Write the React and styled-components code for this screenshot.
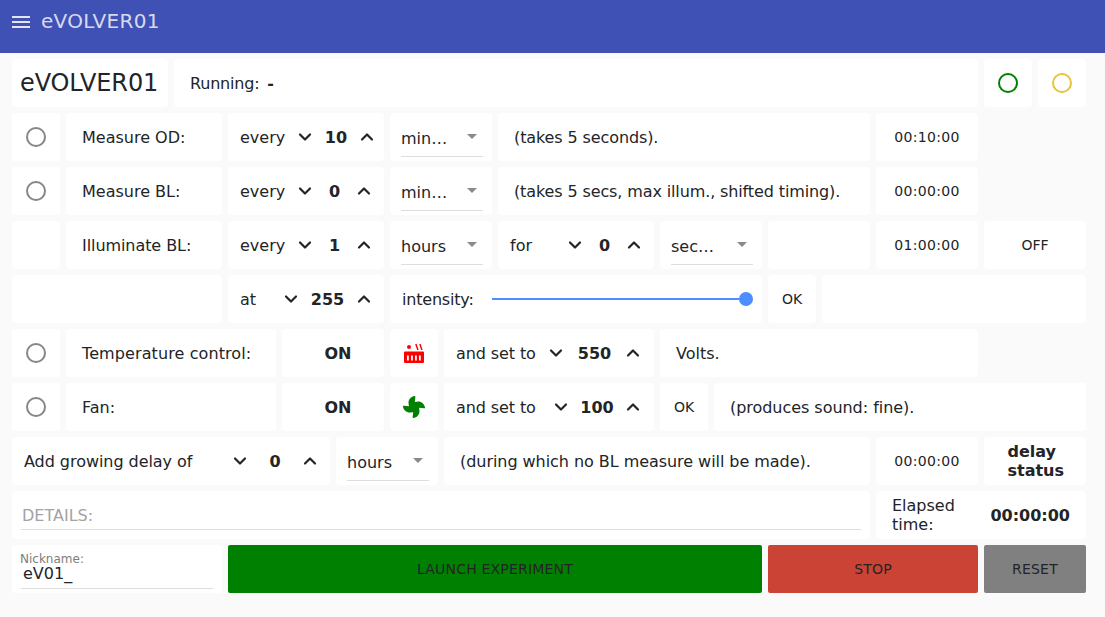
import styled, { createGlobalStyle } from "styled-components";

const GlobalStyle = createGlobalStyle`
  html, body {
    margin: 0;
    height: 100%;
    overflow: hidden;
    background: #fafafa;
    color: #222428;
    font-family: "DejaVu Sans", sans-serif;
    font-size: 16px;
  }
`;

const Header = styled.header`
  height: 53px;
  box-sizing: border-box;
  background: #3f51b5;
  display: flex;
  align-items: flex-start;
  padding: 9px 0 0 12px;
  color: rgba(255, 255, 255, 0.8);
  font-size: 20px;
  letter-spacing: 0.3px;
  gap: 11px;
`;

const Board = styled.main`
  display: grid;
  grid-template-columns: repeat(20, 48px);
  grid-auto-rows: 48px;
  gap: 6px;
  padding: 6px 12px;
`;

const Cell = styled.div`
  grid-column: span ${(p) => p.$span || 1};
  background: #fff;
  border-radius: 4px;
  display: flex;
  align-items: center;
  justify-content: ${(p) => (p.$center ? "center" : "flex-start")};
  padding: 0 ${(p) => (p.$pad === undefined ? 16 : p.$pad)}px;
  box-sizing: border-box;
  min-width: 0;
  white-space: nowrap;
  letter-spacing: ${(p) => p.$track || 0}px;
`;

const TimeCell = styled(Cell).attrs({ $span: 2, $center: true, $pad: 0 })`
  font-size: 14px;
  letter-spacing: 0.3px;
`;

const SmallCell = styled(Cell).attrs({ $center: true, $pad: 0 })`
  font-size: 14px;
`;

const OnCell = styled(Cell).attrs({ $span: 2, $center: true, $pad: 0 })`
  font-weight: 700;
  padding-left: 10px;
`;

const Spacer = styled.div`
  grid-column: span ${(p) => p.$span || 1};
`;

const Title = styled(Cell)`
  font-size: 24px;
  padding: 0 8px;
  letter-spacing: -0.1px;
`;

const RunValue = styled.b`
  margin-left: 8px;
`;

const Radio = styled.span`
  width: 20px;
  height: 20px;
  box-sizing: border-box;
  border: 2px solid #868686;
  border-radius: 50%;
`;

const Lamp = styled.span`
  width: 20px;
  height: 20px;
  box-sizing: border-box;
  border: 2px solid ${(p) => p.$color};
  border-radius: 50%;
`;

const StepLabel = styled.span`
  flex: 1;
  white-space: nowrap;
  letter-spacing: ${(p) => p.$track || 0}px;
`;

const StepValue = styled.b`
  width: ${(p) => p.$w}px;
  text-align: center;
  flex: none;
`;

const StepCell = styled(Cell)`
  padding: 0 ${(p) => p.$end || 8}px 0 12px;
`;

const Chevron = styled.svg`
  width: 24px;
  height: 24px;
  flex: none;
  fill: none;
  stroke: #222428;
  stroke-width: 2.2;
  stroke-linecap: round;
  stroke-linejoin: round;
`;

const SelectCell = styled(Cell)`
  padding: 0 9px 0 11px;
  align-items: stretch;
`;

const SelectBox = styled.div`
  flex: 1;
  min-width: 0;
  display: flex;
  align-items: center;
  justify-content: space-between;
  border-bottom: 1px solid #dedede;
  margin: 0 0 4px;
  padding-top: 7px;
`;

const Caret = styled.span`
  width: 0;
  height: 0;
  margin: 0 6px 3px 0;
  border-left: 5px solid transparent;
  border-right: 5px solid transparent;
  border-top: 5px solid #8a8a8a;
`;

const SliderCell = styled(Cell)`
  grid-column: span 7;
  padding: 0 16px 0 12px;
`;

const SliderLabel = styled.span`
  width: 90px;
  flex: none;
  letter-spacing: -0.2px;
`;

const Track = styled.div`
  flex: 1;
  height: 2px;
  background: #4c8dff;
  position: relative;
`;

const Knob = styled.span`
  position: absolute;
  right: -7px;
  top: -6px;
  width: 14px;
  height: 14px;
  border-radius: 50%;
  background: #4c8dff;
`;

const FieldCell = styled(Cell)`
  padding: 0 9px 9px;
  align-items: stretch;
`;

const Field = styled.div`
  flex: 1;
  border-bottom: 1px solid #dedede;
  display: flex;
  align-items: center;
  padding: 10px 1px 0;
  color: #a3a3a3;
`;

const NickCell = styled(Cell)`
  padding: 7px 9px 4px 9px;
  display: block;
`;

const NickBox = styled.div`
  height: 36px;
  border-bottom: 1px solid #dedede;
`;

const NickLabel = styled.div`
  font-size: 12px;
  line-height: 14px;
  color: #7d7d7d;
  margin-left: -1px;
`;

const NickValue = styled.div`
  line-height: 15px;
  margin-left: 2px;
`;

const DelayText = styled.b`
  width: 58px;
  margin-left: 3px;
  line-height: 19px;
  white-space: normal;
`;

const Elapsed = styled(Cell)`
  justify-content: space-between;
  line-height: 19px;
`;

const ElapsedLabel = styled.span`
  width: 70px;
  white-space: normal;
`;

const ActionButton = styled.button`
  grid-column: span ${(p) => p.$span};
  background: ${(p) => p.$bg};
  border: 0;
  border-radius: 2px;
  color: #222428;
  font: 400 14px "DejaVu Sans", sans-serif;
  letter-spacing: 0.2px;
  text-transform: uppercase;
`;

const Menu = () => (
  <svg width="18" height="24" viewBox="0 0 18 24" fill="none" stroke="rgba(255,255,255,0.85)" strokeWidth="2">
    <path d="M0 8h18M0 13h18M0 18h18" />
  </svg>
);

const Stepper = ({ label, value, w, end, track }) => (
  <StepCell $span={label.length > 15 ? 6 : label.length > 5 ? 4 : 3} $end={end}>
    <StepLabel $track={track}>{label}</StepLabel>
    <Chevron viewBox="0 0 24 24"><path d="M7 9.500 12 14.500l5-5" /></Chevron>
    <StepValue $w={w}>{value}</StepValue>
    <Chevron viewBox="0 0 24 24"><path d="M7 14.500 12 9.500l5 5" /></Chevron>
  </StepCell>
);

const Select = ({ value }) => (
  <SelectCell $span={2}>
    <SelectBox>
      <span>{value}</span>
      <Caret />
    </SelectBox>
  </SelectCell>
);

const Heater = () => (
  <svg width="24" height="24" viewBox="0 0 24 24" fill="#ff0000">
    <circle cx="7" cy="6" r="2" />
    <path d="M14 3c.3 2.500 1.500 3.500 1.800 6M18 3c.3 2.500 1.500 3.500 1.800 6" fill="none" stroke="#ff0000" strokeWidth="1.500" />
    <path d="M3 10.500h18a1 1 0 0 1 1 1V21a1 1 0 0 1-1 1H3a1 1 0 0 1-1-1V11.500a1 1 0 0 1 1-1Z" />
    <path d="M5 14.500h1.800v5H5ZM9 14.500h1.800v5H9ZM13 14.500h1.800v5H13ZM17 14.500h1.800v5H17Z" fill="#fff" />
  </svg>
);

const Fan = () => (
  <svg width="22" height="22" viewBox="0 0 512 512" fill="#008000">
    <path d="M352.570 128c-28.090 0-54.090 4.520-77.060 12.860l12.410-123.110C289 7.310 279.810-1.180 269.330.13 189.630 10.130 128 77.640 128 159.430c0 28.090 4.520 54.090 12.860 77.060L17.750 224.080C7.310 223-1.180 232.190.13 242.670c10 79.700 77.510 141.330 159.300 141.330 28.090 0 54.090-4.520 77.060-12.860l-12.410 123.110c-1.050 10.430 8.110 18.930 18.590 17.620 79.700-10 141.330-77.510 141.330-159.300 0-28.090-4.520-54.090-12.860-77.060l123.110 12.410c10.440 1.050 18.930-8.110 17.620-18.590-10-79.700-77.510-141.330-159.300-141.330Z" />
  </svg>
);

const App = () => (
  <>
    <GlobalStyle />
    <Header>
      <Menu />
      <span>eVOLVER01</span>
    </Header>
    <Board>
      <Title $span={3}>eVOLVER01</Title>
      <Cell $span={15} $track={-0.2}>Running: <RunValue>-</RunValue></Cell>
      <Cell $center $pad={0}><Lamp $color="#008000" /></Cell>
      <Cell $center $pad={0}><Lamp $color="#e5c53a" /></Cell>

      <Cell $center $pad={0}><Radio /></Cell>
      <Cell $span={3}>Measure OD:</Cell>
      <Stepper label="every" value="10" w={38} end={5} />
      <Select value="min…" />
      <Cell $span={7} $track={-0.11}>(takes 5 seconds).</Cell>
      <TimeCell>00:10:00</TimeCell>
      <Spacer $span={2} />

      <Cell $center $pad={0}><Radio /></Cell>
      <Cell $span={3}>Measure BL:</Cell>
      <Stepper label="every" value="0" w={35} />
      <Select value="min…" />
      <Cell $span={7} $track={-0.12}>(takes 5 secs, max illum., shifted timing).</Cell>
      <TimeCell>00:00:00</TimeCell>
      <Spacer $span={2} />

      <Cell />
      <Cell $span={3} $track={-0.07}>Illuminate BL:</Cell>
      <Stepper label="every" value="1" w={35} />
      <Select value="hours" />
      <Stepper label="for" value="0" w={35} />
      <Select value="sec…" />
      <Cell $span={2} />
      <TimeCell>01:00:00</TimeCell>
      <SmallCell $span={2}>OFF</SmallCell>

      <Cell $span={4} />
      <Stepper label="at" value="255" w={49} />
      <SliderCell>
        <SliderLabel>intensity:</SliderLabel>
        <Track><Knob /></Track>
      </SliderCell>
      <SmallCell>OK</SmallCell>
      <Cell $span={5} />

      <Cell $center $pad={0}><Radio /></Cell>
      <Cell $span={4} $track={0.1}>Temperature control:</Cell>
      <OnCell>ON</OnCell>
      <Cell $center $pad={0}><Heater /></Cell>
      <Stepper label="and set to" value="550" w={53} end={9} track={-0.1} />
      <Cell $span={6}>Volts.</Cell>
      <Spacer $span={2} />

      <Cell $center $pad={0}><Radio /></Cell>
      <Cell $span={4}>Fan:</Cell>
      <OnCell>ON</OnCell>
      <Cell $center $pad={0}><Fan /></Cell>
      <Stepper label="and set to" value="100" w={48} end={9} track={-0.1} />
      <SmallCell>OK</SmallCell>
      <Cell $span={7} $track={-0.04}>(produces sound: fine).</Cell>

      <Stepper label="Add growing delay of" value="0" w={46} track={-0.05} />
      <Select value="hours" />
      <Cell $span={8} $track={-0.05}>(during which no BL measure will be made).</Cell>
      <TimeCell>00:00:00</TimeCell>
      <Cell $span={2} $center $pad={0}><DelayText>delay status</DelayText></Cell>

      <FieldCell $span={16}><Field>DETAILS:</Field></FieldCell>
      <Elapsed $span={4}>
        <ElapsedLabel>Elapsed time:</ElapsedLabel>
        <b>00:00:00</b>
      </Elapsed>

      <NickCell $span={4}>
        <NickBox>
          <NickLabel>Nickname:</NickLabel>
          <NickValue>eV01_</NickValue>
        </NickBox>
      </NickCell>
      <ActionButton $span={10} $bg="#008000">Launch experiment</ActionButton>
      <ActionButton $span={4} $bg="#cb4335">Stop</ActionButton>
      <ActionButton $span={2} $bg="#808080">Reset</ActionButton>
    </Board>
  </>
);

export default App;
